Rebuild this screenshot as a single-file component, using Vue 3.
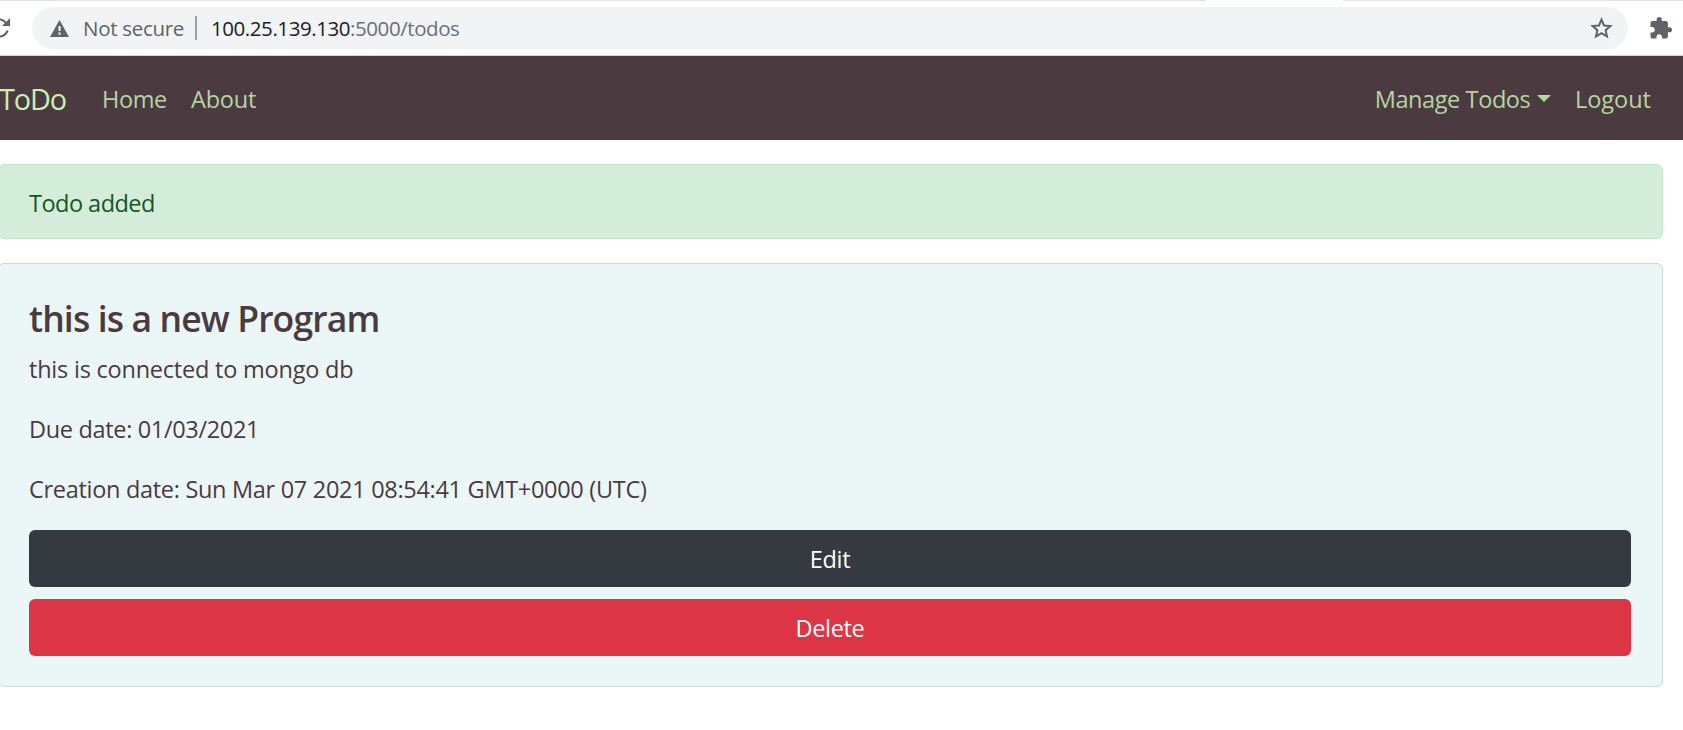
<script setup>
const links = ['Home', 'About']
const details = [
  { cls: 'body', text: 'this is connected to mongo db' },
  { cls: 'due', text: 'Due date: 01/03/2021' },
  { cls: 'created', text: 'Creation date: Sun Mar 07 2021 08:54:41 GMT+0000 (UTC)' },
]
</script>

<template>
  <div class="page">
    <div class="tabline"><i></i><i></i></div>
    <header class="toolbar">
      <svg class="reload" width="10" height="22" viewBox="0 0 10 22">
        <path d="M-4 3.1 A8 8 0 0 1 6 6.2 M7.5 13.5 A8 8 0 0 1 -4 18.5" fill="none" stroke="#5f6368" stroke-width="2.1" />
        <path d="M10 1 V9 H2 Z" fill="#5f6368" />
      </svg>
      <div class="omnibox">
        <svg class="warn" width="19" height="17" viewBox="0 0 19 17">
          <path d="M9.5 0 L19 17 H0 Z" fill="#5f6368" />
          <path d="M8.5 6 H10.6 V11 H8.5 Z M8.5 12.6 H10.6 V14.7 H8.5 Z" fill="#f1f3f4" />
        </svg>
        <span class="insecure">Not secure</span>
        <span class="divider"></span>
        <span class="url"><b>100.25.139.130</b>:5000/todos</span>
        <svg class="star" width="23" height="22" viewBox="0 0 23 22">
          <path d="M11.5 2.6 L14 8.5 L20.4 9 L15.6 13.2 L17 19.4 L11.5 16.1 L6 19.4 L7.4 13.2 L2.6 9 L9 8.5 Z" fill="none" stroke="#5f6368" stroke-width="2" />
        </svg>
      </div>
      <svg class="puzzle" width="22" height="22" viewBox="1.5 1 21.5 21.5">
        <path fill="#5f6368" d="M20.5 11H19V7c0-1.1-.9-2-2-2h-4V3.5a2.5 2.5 0 0 0-5 0V5H4c-1.1 0-1.99.9-1.99 2v3.8H3.5c1.49 0 2.7 1.21 2.7 2.7s-1.21 2.7-2.7 2.7H2V20c0 1.1.9 2 2 2h3.8v-1.5c0-1.49 1.21-2.7 2.7-2.7 1.49 0 2.7 1.21 2.7 2.7V22H17c1.1 0 2-.9 2-2v-4h1.5a2.5 2.5 0 0 0 0-5z" />
      </svg>
    </header>
    <nav class="navbar">
      <a class="brand">ToDo</a>
      <a v-for="l in links" :key="l" class="link" :class="l.toLowerCase()">{{ l }}</a>
      <a class="link manage">Manage Todos</a>
      <span class="caret"></span>
      <a class="link logout">Logout</a>
    </nav>
    <main>
      <div class="alert"><span>Todo added</span></div>
      <section class="card">
        <h3><span>this is a new Program</span></h3>
        <p v-for="d in details" :key="d.cls" :class="d.cls">{{ d.text }}</p>
        <button class="edit">Edit</button>
        <button class="delete">Delete</button>
      </section>
    </main>
  </div>
</template>

<style>
body { margin: 0; background: #fff; overflow: hidden; }
</style>

<style scoped>
.page { width: 1683px; height: 730px; overflow: hidden; background: #fff; font: 23.5px/36px "Open Sans", "Noto Sans", sans-serif; white-space: nowrap; }
.tabline { display: flex; justify-content: space-between; height: 1px; }
.tabline i { background: #dee1e6; width: 1206px; }
.tabline i + i { width: 340px; }
.toolbar { display: flex; align-items: center; box-sizing: border-box; height: 55px; border-bottom: 1px solid #d5d5d8; }
.reload { flex: none; margin-right: 22px; }
.omnibox { box-sizing: border-box; width: 1596px; height: 42px; border-radius: 21px; background: #f1f3f4; display: flex; align-items: center; font-size: 20.5px; color: #5f6368; }
.warn { margin-left: 18px; }
.insecure { width: 112px; margin-left: 14px; letter-spacing: -0.3px; }
.divider { width: 2px; height: 24px; background: #9aa0a6; }
.url { margin-left: 14px; color: #6c7074; letter-spacing: -0.43px; }
.url b { font-weight: 400; color: #202124; }
.star { margin: 0 15.5px 0 auto; }
.puzzle { margin-left: 22px; }
.navbar { display: flex; align-items: center; box-sizing: border-box; height: 84px; padding-top: 2px; background: #4b3a40; color: #b3d6a0; }
.brand { width: 103px; margin-left: -1px; font-size: 28.8px; letter-spacing: -1.1px; color: #c6f1b1; }
.home { width: 89px; letter-spacing: -0.4px; }
.about { letter-spacing: -0.2px; }
.manage { margin-left: auto; letter-spacing: -0.4px; }
.caret { border: 7px solid transparent; border-top-color: #b3d6a0; border-bottom: 0; margin: 0 24px 2px 6.5px; }
.logout { margin-right: 32px; }
main { margin: 24px 20px 0 -2px; }
.alert { box-sizing: border-box; height: 75px; border: 1px solid #c3e6cb; border-radius: 6px; background: #d4edda; color: #155724; padding: 20px 30px; letter-spacing: -0.52px; }
.card { box-sizing: border-box; height: 424px; margin-top: 24px; border: 1px solid #cbdad9; border-radius: 6px; background: #ebf7f7; padding: 33px 31px 30px 30px; color: #4b3a40; }
h3 { margin: 0 0 11px; font-size: 35.5px; line-height: 43px; font-weight: 600; letter-spacing: -0.87px; }
p { margin: 0 0 24px; }
.body { letter-spacing: -0.22px; }
.due { letter-spacing: -0.33px; }
.created { letter-spacing: -0.3px; margin-bottom: 23px; }
button { display: block; box-sizing: border-box; width: 100%; height: 57px; border: 0; border-radius: 6px; color: #fff; font: inherit; letter-spacing: -0.35px; padding: 0; }
.edit { background: #343a40; margin-bottom: 12px; }
.delete { background: #dc3545; }
</style>
